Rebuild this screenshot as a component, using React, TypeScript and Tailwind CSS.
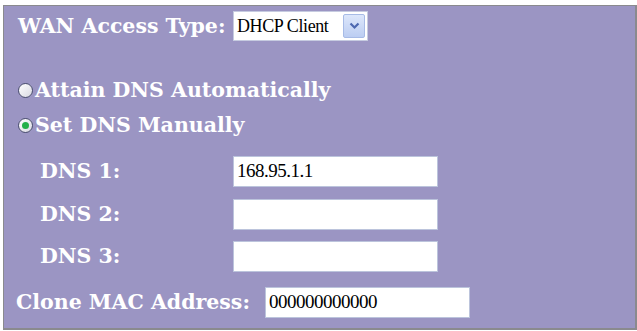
import React from 'react';

const labelFont = { fontFamily: '"DejaVu Serif", serif' };
const fieldFont = { fontFamily: '"Liberation Serif", "Times New Roman", serif' };

const Radio: React.FC<{ checked?: boolean }> = ({ checked }) => (
    <span className="w-[15px] h-[15px] rounded-full border-[1.5px] border-[#4a4e6e] bg-gradient-to-br from-white to-[#d9d9e2] flex items-center justify-center shrink-0">
        {checked && <span className="w-[7px] h-[7px] rounded-full bg-[#23b04a]" />}
    </span>
);

const TextBox: React.FC<{ value?: string }> = ({ value = '' }) => (
    <div
        className="w-[205px] h-[31px] bg-white border border-[#bcc4dc] flex items-center pl-[3px] text-[19px] font-normal tracking-[-0.5px] text-black"
        style={fieldFont}
    >
        {value}
    </div>
);

export default function App() {
    return (
        <div className="w-[637px] h-[331px] bg-white pt-[5px] pl-[3px]">
            <div
                className="w-[634px] h-[325px] bg-[#9b95c3] border border-[#8a8a8e] border-r-2 border-b-2 flex flex-col text-white font-bold text-[20.5px]"
                style={labelFont}
            >
                {/* WAN type */}
                <div className="mt-[5px] h-[30px] flex items-center pl-[14px]">
                    <span className="w-[215px]">WAN Access Type:</span>
                    <div className="w-[135px] h-[30px] bg-white border border-[#c6cbe0] flex items-center justify-between pl-[3px] pr-[2px] font-normal text-black text-[18px] tracking-[-0.4px]" style={fieldFont}>
                        <span>DHCP Client</span>
                        <span className="w-[22px] h-[24px] rounded-[2px] border border-[#a7bbe6] bg-gradient-to-b from-[#dde7fb] to-[#bccdf2] flex items-center justify-center">
                            <svg width="11" height="8" viewBox="0 0 11 8">
                                <path d="M1.5 1.5 L5.5 5.5 L9.5 1.5" fill="none" stroke="#4d68b0" strokeWidth="2.2" />
                            </svg>
                        </span>
                    </div>
                </div>

                {/* DNS mode */}
                <div className="mt-[37px] h-[24px] flex items-center gap-[2px] pl-[14px]">
                    <Radio />
                    <span>Attain DNS Automatically</span>
                </div>
                <div className="mt-[11px] h-[24px] flex items-center gap-[2px] pl-[14px]">
                    <Radio checked />
                    <span>Set DNS Manually</span>
                </div>

                {/* DNS servers */}
                <div className="mt-[19px] flex items-center pl-[36px]">
                    <span className="w-[193px]">DNS 1:</span>
                    <TextBox value="168.95.1.1" />
                </div>
                <div className="mt-[12px] flex items-center pl-[36px]">
                    <span className="w-[193px]">DNS 2:</span>
                    <TextBox />
                </div>
                <div className="mt-[11px] flex items-center pl-[36px]">
                    <span className="w-[193px]">DNS 3:</span>
                    <TextBox />
                </div>

                {/* MAC */}
                <div className="mt-[15px] flex items-center pl-[12px]">
                    <span className="w-[249px]">Clone MAC Address:</span>
                    <TextBox value="000000000000" />
                </div>
            </div>
        </div>
    );
}
